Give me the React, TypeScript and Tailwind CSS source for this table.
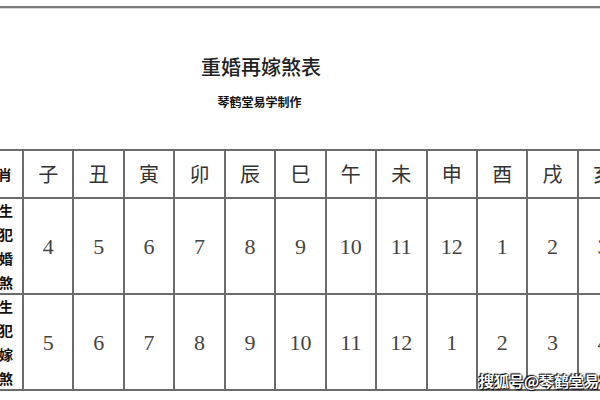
import React from "react";

const zodiac = ["子", "丑", "寅", "卯", "辰", "巳", "午", "未", "申", "酉", "戌", "亥"];
const row1 = ["4", "5", "6", "7", "8", "9", "10", "11", "12", "1", "2", "3"];
const row2 = ["5", "6", "7", "8", "9", "10", "11", "12", "1", "2", "3", "4"];

function Label({ chars }: { chars: string[] }) {
  return (
    <div className="bg-white overflow-hidden flex flex-col justify-center items-end pr-[9px]">
      {chars.map((c, i) => (
        <div
          key={i}
          className="h-[24px] leading-[24px] text-[14px] font-bold text-[#111] whitespace-nowrap font-['Noto_Sans_CJK_SC',sans-serif]"
        >
          {c}
        </div>
      ))}
    </div>
  );
}

function NumCell({ n }: { n: string }) {
  return (
    <div className="bg-white flex items-center justify-center text-[22px] text-[#444] font-['Liberation_Serif',serif]">
      {n}
    </div>
  );
}

export default function App() {
  return (
    <div className="relative w-[600px] h-[400px] overflow-hidden bg-white flex flex-col font-['Noto_Sans_CJK_SC',sans-serif]">
      <div className="mt-[6px] h-[2px] bg-[#7a7a7a] w-full" />
      <div className="h-[1px] bg-[#d8d8d8] w-full" />
      <div className="mt-[48px] w-[600px] pr-[78px] text-center text-[20px] leading-[20px] font-medium text-[#222]">
        重婚再嫁煞表
      </div>
      <div className="mt-[19px] w-[600px] pr-[81px] text-center text-[12px] leading-[12px] font-bold text-[#111]">
        琴鹤堂易学制作
      </div>
      <div className="mt-[41px] w-[627px] bg-[#6a6a6a] py-[2px] grid grid-cols-[22px_repeat(12,48.45px)] grid-rows-[46px_94px_94px] gap-[2px]">
        <div className="bg-white overflow-hidden flex items-center justify-end pr-[10px]">
          <span className="text-[14px] font-bold text-[#111] whitespace-nowrap">生肖</span>
        </div>
        {zodiac.map((z) => (
          <div key={z} className="bg-white flex items-center justify-center text-[20px] text-[#333]">
            {z}
          </div>
        ))}
        <Label chars={["男生", "人犯", "重婚", "之煞"]} />
        {row1.map((n, i) => (
          <NumCell key={i} n={n} />
        ))}
        <Label chars={["女生", "人犯", "再嫁", "之煞"]} />
        {row2.map((n, i) => (
          <NumCell key={i} n={n} />
        ))}
      </div>
      <div className="absolute left-[479px] top-[372px] text-[15px] leading-[18px] font-bold text-white whitespace-nowrap [text-shadow:0_0_2px_#000,1px_1px_1px_#000,-1px_-1px_1px_#000]">
        搜狐号@琴鹤堂易学
      </div>
    </div>
  );
}
